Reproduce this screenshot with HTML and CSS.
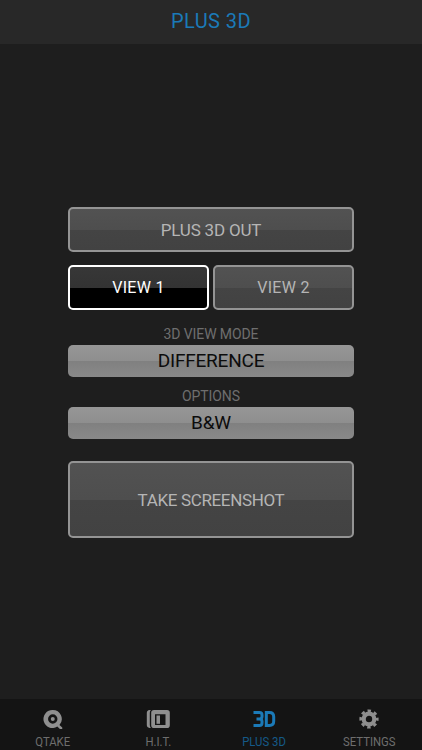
FILE: index.html
```html
<!DOCTYPE html>
<html lang="en">
<head>
<meta charset="utf-8">
<title>Plus 3D</title>
<link rel="stylesheet" href="styles.css">
</head>
<body>
<div class="app">
  <header class="header">PLUS 3D</header>
  <main class="main">
    <button class="btn btn-out"><span>PLUS 3D OUT</span></button>
    <div class="views">
      <button class="btn btn-view active"><span>VIEW 1</span></button>
      <button class="btn btn-view"><span>VIEW 2</span></button>
    </div>
    <div class="label label-mode">3D VIEW MODE</div>
    <button class="select"><span>DIFFERENCE</span></button>
    <div class="label label-options">OPTIONS</div>
    <button class="select"><span>B&amp;W</span></button>
    <button class="btn btn-shot"><span>TAKE SCREENSHOT</span></button>
  </main>
  <nav class="tabs">
    <div class="tab">
      <svg class="icon" viewBox="0 0 24 20" width="24" height="20"><path fill="#8f8f8f" fill-rule="evenodd" d="M11.750 1a9 9 0 0 1 6.700 15l2.800 2.600v1.400h-2.300l-2.700-2.400A9 9 0 1 1 11.750 1zm0 4.300a4.700 4.700 0 1 0 0 9.400 4.700 4.700 0 0 0 0-9.400z"/><circle cx="11.750" cy="10" r="2" fill="#8f8f8f"/></svg>
      <span class="tab-label">QTAKE</span>
    </div>
    <div class="tab">
      <svg class="icon" viewBox="0 0 24 20" width="24" height="20"><path fill="#8f8f8f" fill-rule="evenodd" d="M8 1h13a2.800 2.800 0 0 1 2.800 2.800v12.400A2.800 2.800 0 0 1 21 19H8a2.800 2.800 0 0 1-2.800-2.800V3.800A2.800 2.800 0 0 1 8 1zm1 4.300V16h10.500V5.300z"/><rect x="10.500" y="6.500" width="3.500" height="8.300" fill="#8f8f8f"/><path fill="#8f8f8f" d="M4.800 1.100Q3.800 2.200 3.800 4v12q0 1.800 1 2.900H3.500Q.8 18.500.8 16V4Q.8 1.500 3.500 1.100z"/></svg>
      <span class="tab-label">H.I.T.</span>
    </div>
    <div class="tab tab-active">
      <svg class="icon" viewBox="0 0 24 20" width="24" height="20"><g fill="none" stroke="#1b7ab8" stroke-width="3"><path d="M1.500 3.500h6q2.500 0 2.500 2.500v1.500q0 2.500-2.500 2.500H4.500M7.500 10q2.500 0 2.500 2.500V14q0 2.500-2.500 2.500h-6"/><path d="M14.300 3.500h3.200q4.200 0 4.200 4.200v4.600q0 4.200-4.200 4.200h-3.200z"/></g></svg>
      <span class="tab-label">PLUS 3D</span>
    </div>
    <div class="tab">
      <svg class="icon" viewBox="0 0 24 20" width="24" height="20"><g fill="none" stroke="#8f8f8f"><circle cx="12" cy="10" r="5.300" stroke-width="4.200"/><circle cx="12" cy="10" r="8.200" stroke-width="2.800" stroke-dasharray="3.400 3.040" stroke-dashoffset="1.700"/></g></svg>
      <span class="tab-label">SETTINGS</span>
    </div>
  </nav>
</div>
</body>
</html>
```
FILE: styles.css
```css
* { box-sizing: border-box; }
html, body { margin: 0; padding: 0; height: 100%; }
body { background: #1e1e1e; font-family: Roboto, "Liberation Sans", sans-serif; }
.app { width: 422px; height: 750px; display: flex; flex-direction: column; overflow: hidden; }
.header {
  height: 44px; flex: none; background: #282828; color: #1b7ab8;
  display: flex; align-items: center; justify-content: center;
  font-size: 20px; letter-spacing: .4px; padding-bottom: 2px;
}
.main {
  flex: 1; display: flex; flex-direction: column;
  padding: 163px 68px 0;
}
button { font-family: inherit; padding: 0; margin: 0; display: block; width: 100%; }
.btn {
  border: 2px solid #949494; border-radius: 5px; color: #b5b5b5;
  font-size: 17px; letter-spacing: -.2px;
  background: linear-gradient(#525252 0, #4e4e4e 50%, #444 50%, #424242 100%);
}
.btn-out { height: 45px; }
.views { display: flex; gap: 4px; margin-top: 13px; }
.btn-view { height: 45px; flex: 1; font-size: 16px; letter-spacing: .3px; }
.btn-view.active {
  border-color: #fff; color: #fff;
  background: linear-gradient(#373737 0, #333 50%, #000 50%, #000 100%);
}
.label { text-align: center; color: #6e6e6e; font-size: 14px; line-height: 16px; letter-spacing: -.1px; }
.label-mode { margin-top: 16px; margin-bottom: 3px; }
.label-options { margin-top: 11px; margin-bottom: 3px; }
.select {
  height: 32px; border: none; border-radius: 5px; color: #0c0c0c;
  font-size: 19px; letter-spacing: -.2px; padding-bottom: 1px;
  background: linear-gradient(#969696 0, #8e8e8e 50%, #808080 50%, #898989 100%);
}
.btn-shot { height: 77px; margin-top: 22px; letter-spacing: -.35px; }
.tabs {
  height: 51px; flex: none; background: #141414; display: flex;
}
.tab {
  flex: 1; display: flex; flex-direction: column; align-items: center;
  color: #6e6e6e; padding-top: 10px;
}
.tab-label {
  font-size: 13.5px; line-height: 14px; margin-top: 5px;
  transform: scaleX(.84); white-space: nowrap;
}
.icon { display: block; }
.tab-active { color: #145a88; }
```
